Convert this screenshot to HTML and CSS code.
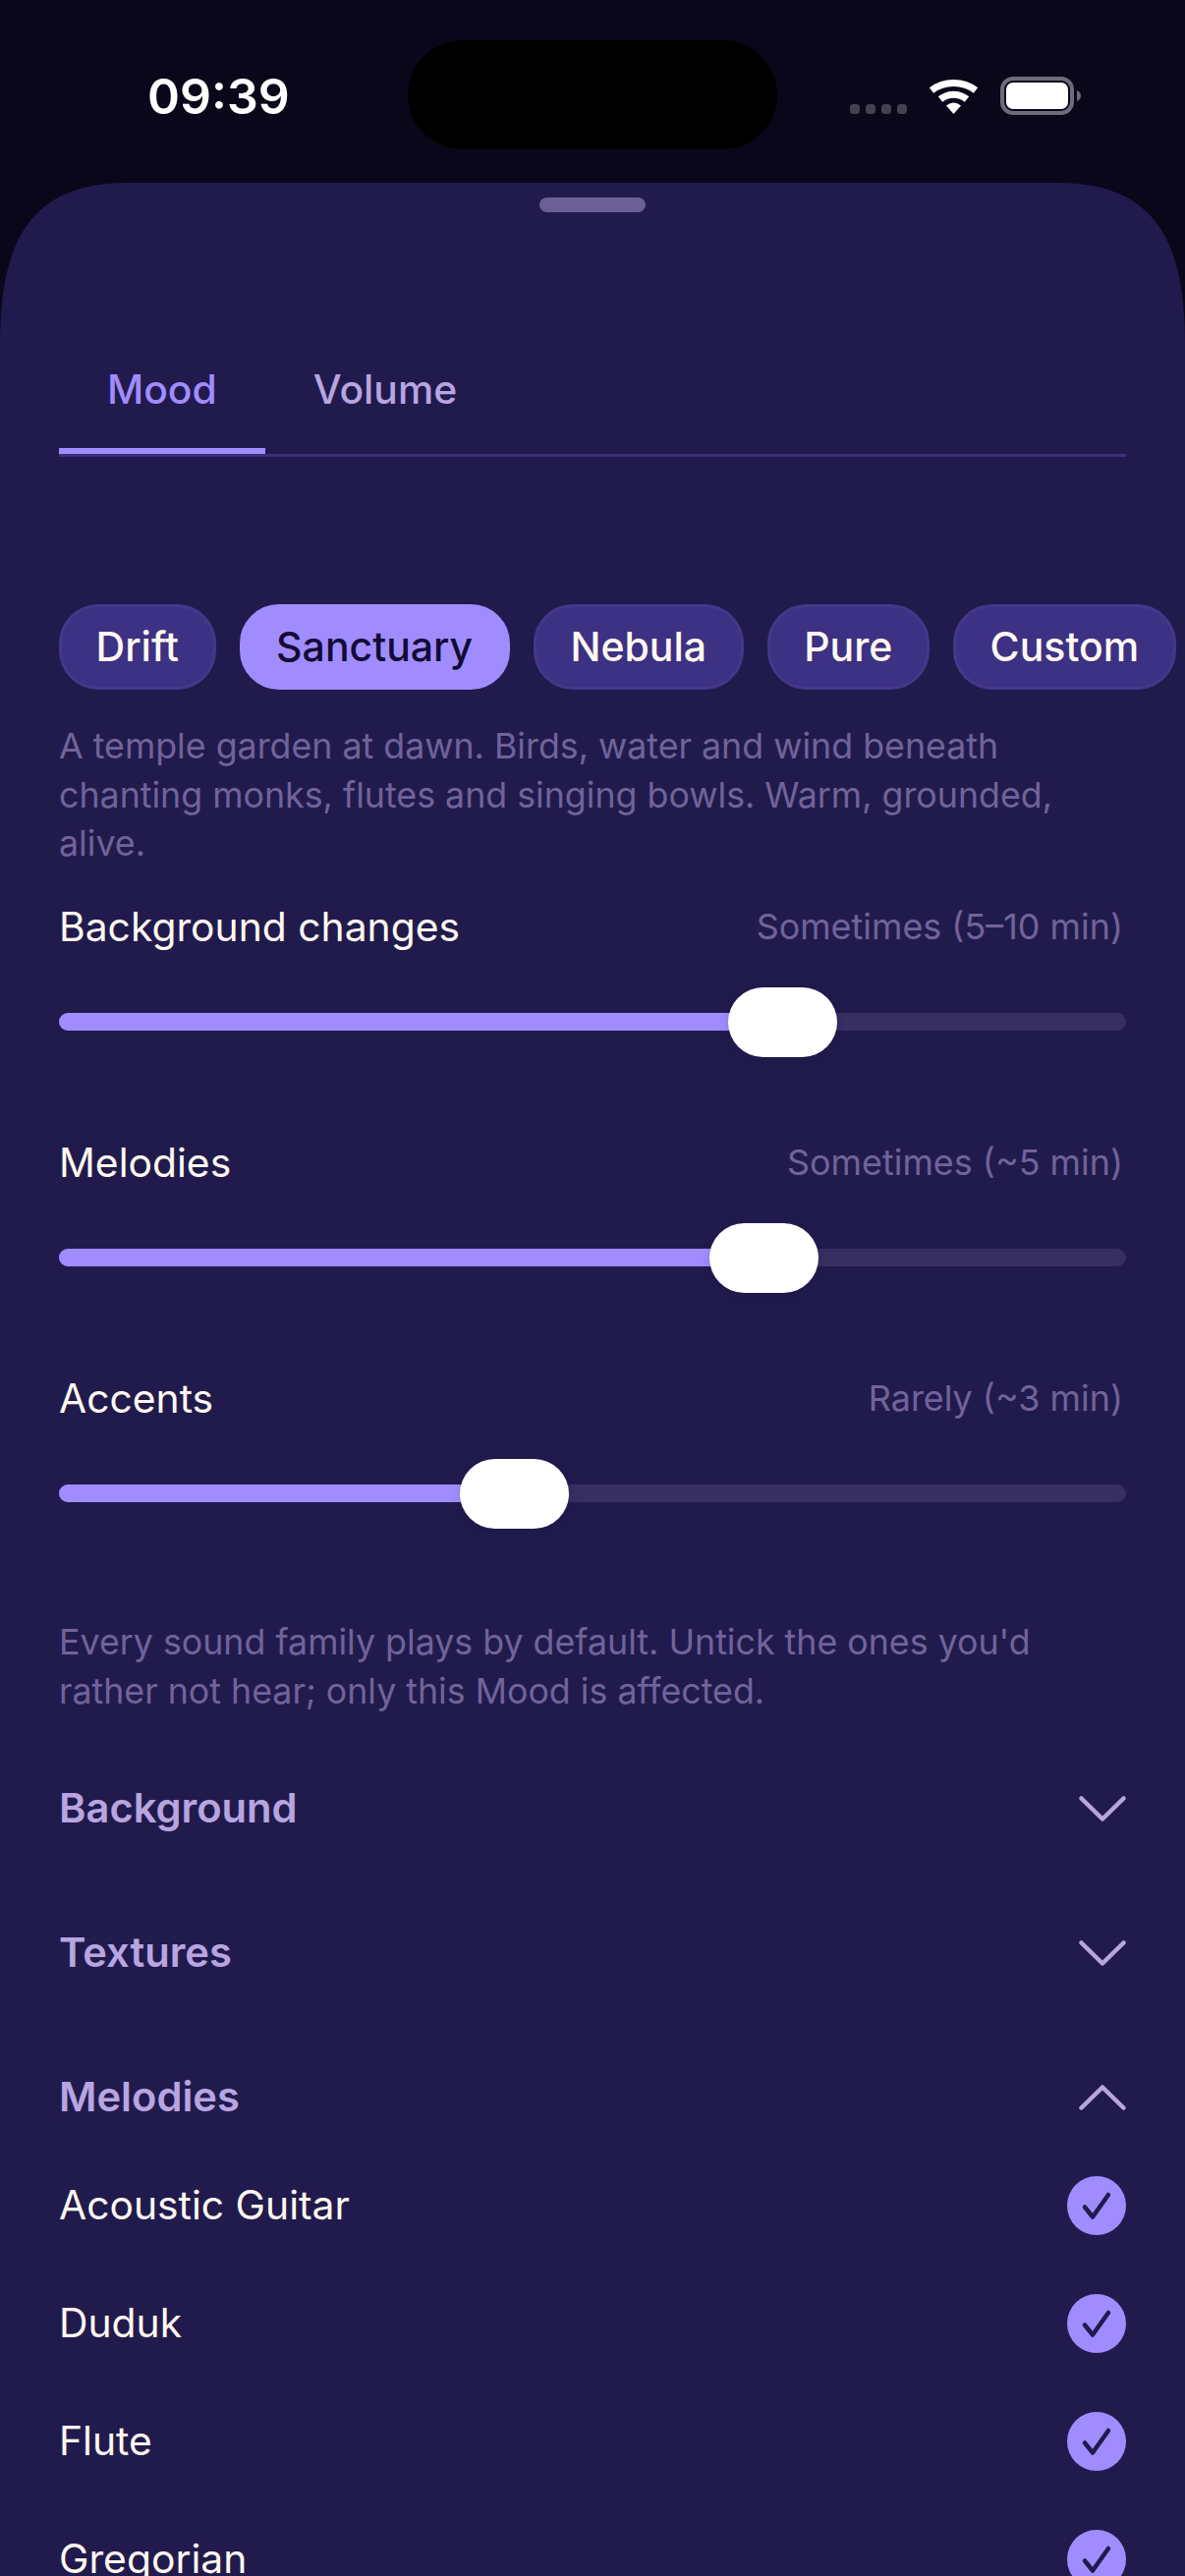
FILE: index.html
```html
<!DOCTYPE html>
<html lang="en">
<head>
<meta charset="utf-8">
<title>Mood settings</title>
<link rel="stylesheet" href="styles.css">
</head>
<body>
<div class="screen">
  <header class="status">
    <span class="time">09:39</span>
    <div class="island"></div>
    <div class="status-icons">
      <svg class="signal" width="58" height="10" viewBox="0 0 58 10"><rect x="0" y="0" width="10" height="10" rx="3.500"/><rect x="16" y="0" width="10" height="10" rx="3.500"/><rect x="32" y="0" width="10" height="10" rx="3.500"/><rect x="48" y="0" width="10" height="10" rx="3.500"/></svg>
      <svg class="wifi" width="51" height="37" viewBox="0 0 51 37"><path d="M3 13 C16 3 35 3 48 13" fill="none" stroke="#fff" stroke-width="7"/><path d="M12 22 C20 15.500 31 15.500 39 22" fill="none" stroke="#fff" stroke-width="7"/><path d="M18 28.500 Q25.500 22.500 33 28.500 L25.500 37 Z" fill="#fff"/></svg>
      <svg class="battery" width="82" height="39" viewBox="0 0 82 39"><rect x="2" y="2" width="71" height="35" rx="11" fill="none" stroke="#6e6b7c" stroke-width="4"/><rect x="6" y="6" width="63" height="27" rx="7" fill="#fff"/><path d="M78 14 Q82 16 82 19.500 Q82 23 78 25 Z" fill="#6e6b7c"/></svg>
    </div>
  </header>

  <main class="sheet">
    <div class="handle"></div>
    <nav class="tabs">
      <span class="tab tab-active">Mood</span>
      <span class="tab">Volume</span>
    </nav>

    <div class="chips">
      <span class="chip">Drift</span>
      <span class="chip chip-active">Sanctuary</span>
      <span class="chip">Nebula</span>
      <span class="chip">Pure</span>
      <span class="chip">Custom</span>
    </div>

    <p class="desc">A temple garden at dawn. Birds, water and wind beneath chanting monks, flutes and singing bowls. Warm, grounded, alive.</p>

    <section class="slider">
      <div class="slider-head"><span class="slider-label">Background changes</span><span class="slider-value">Sometimes (5–10 min)</span></div>
      <div class="track"><div class="fill" style="width:67%"></div><div class="thumb" style="left:62.7%"></div></div>
    </section>
    <section class="slider">
      <div class="slider-head"><span class="slider-label">Melodies</span><span class="slider-value">Sometimes (~5 min)</span></div>
      <div class="track"><div class="fill" style="width:65%"></div><div class="thumb" style="left:61%"></div></div>
    </section>
    <section class="slider">
      <div class="slider-head"><span class="slider-label">Accents</span><span class="slider-value">Rarely (~3 min)</span></div>
      <div class="track"><div class="fill" style="width:42%"></div><div class="thumb" style="left:37.6%"></div></div>
    </section>

    <p class="note">Every sound family plays by default. Untick the ones you'd rather not hear; only this Mood is affected.</p>

    <div class="group">
      <span class="group-title">Background</span>
      <svg class="chev" width="48" height="26" viewBox="0 0 48 26"><path d="M2.500 2.500 L24 23.500 L45.500 2.500"/></svg>
    </div>
    <div class="group">
      <span class="group-title">Textures</span>
      <svg class="chev" width="48" height="26" viewBox="0 0 48 26"><path d="M2.500 2.500 L24 23.500 L45.500 2.500"/></svg>
    </div>
    <div class="group">
      <span class="group-title">Melodies</span>
      <svg class="chev" width="48" height="26" viewBox="0 0 48 26"><path d="M2.500 23.500 L24 2.500 L45.500 23.500"/></svg>
    </div>

    <div class="items">
      <div class="item"><span class="item-label">Acoustic Guitar</span><span class="check"><svg width="60" height="60" viewBox="0 0 60 60"><path d="M18 31.500 L26 41.500 L42 19"/></svg></span></div>
      <div class="item"><span class="item-label">Duduk</span><span class="check"><svg width="60" height="60" viewBox="0 0 60 60"><path d="M18 31.500 L26 41.500 L42 19"/></svg></span></div>
      <div class="item"><span class="item-label">Flute</span><span class="check"><svg width="60" height="60" viewBox="0 0 60 60"><path d="M18 31.500 L26 41.500 L42 19"/></svg></span></div>
      <div class="item"><span class="item-label">Gregorian</span><span class="check"><svg width="60" height="60" viewBox="0 0 60 60"><path d="M18 31.500 L26 41.500 L42 19"/></svg></span></div>
    </div>
  </main>
</div>
</body>
</html>
```
FILE: styles.css
```css
* { box-sizing: border-box; }
html, body { margin: 0; padding: 0; background: #090719; }
body { font-family: Inter, "Liberation Sans", sans-serif; color: #fff; }
.screen { width: 1206px; height: 2622px; overflow: hidden; position: relative; background: #090719; }

.status { height: 186px; position: relative; display: flex; justify-content: space-between; padding: 0 106px 0 150px; }
.time { font-size: 50px; font-weight: 600; line-height: 62px; margin-top: 67px; }
.island { position: absolute; left: 415px; top: 41px; width: 376px; height: 111px; border-radius: 56px; background: #000; }
.status-icons { display: flex; align-items: flex-start; gap: 22px; }
.signal { fill: #44414f; margin-top: 106px; }
.wifi { margin-top: 79px; }
.battery { margin-top: 78px; }

.sheet { height: 2436px; background: #211b4d; clip-path: path('M0 164 C0 60 30 0 130 0 H1076 C1176 0 1206 60 1206 164 V2436 H0 Z'); padding: 15px 60px 0; position: relative; }
.handle { width: 108px; height: 15px; border-radius: 8px; background: #6a5f96; margin: 0 auto; }

.tabs { display: flex; height: 249px; padding-top: 140px; border-bottom: 3px solid #3b2f78; }
.tab { font-size: 40.800px; font-weight: 500; color: #b8a5e0; line-height: 58px; height: 95px; margin-top: 11px; padding: 0 49px; }
.tab-active { color: #a18cff; border-bottom: 6px solid #a18cff; }

.chips { display: flex; gap: 24px; margin-top: 150px; width: 1200px; }
.chip { height: 87px; flex: none; padding: 0 34.600px; border-radius: 40px; background: #3d3183; border: 3px solid #43388a; font-size: 41px; font-weight: 500; line-height: 80px; color: #fff8ef; }
.chip-active { background: #a18cff; border-color: #a18cff; color: #120b36; }

.desc { margin: 33px 0 35px; font-size: 35.750px; line-height: 49.500px; color: #71639a; }

.slider { height: 240px; }
.slider-head { display: flex; justify-content: space-between; align-items: center; height: 49px; }
.slider-label { font-size: 40.800px; color: #fff8ef; }
.slider-value { font-size: 35.900px; color: #71639a; padding-right: 3px; }
.track { position: relative; height: 18px; margin-top: 63px; border-radius: 9px; background: #372e62; }
.fill { height: 18px; border-radius: 9px; background: #a18cff; }
.thumb { position: absolute; top: -26px; width: 111px; height: 71px; border-radius: 36px; background: #fff; box-shadow: 0 2px 10px rgba(20, 12, 60, 0.15); }

.note { margin: 7px 0 22px; font-size: 35.750px; line-height: 50px; color: #71639a; }

.group { display: flex; justify-content: space-between; align-items: center; height: 147px; font-size: 41.700px; font-weight: 600; color: #b8a5e0; }
.group-title { padding-bottom: 2px; }
.chev { fill: none; stroke: #b8a5e0; stroke-width: 4.500; stroke-linecap: round; stroke-linejoin: round; }

.items { margin-top: -24px; }
.item { display: flex; justify-content: space-between; align-items: center; height: 120px; font-size: 40.800px; color: #fff8ef; }
.item-label { padding-bottom: 2px; }
.check { width: 60px; height: 60px; border-radius: 50%; background: #a18cff; display: flex; }
.check path { fill: none; stroke: #211b4d; stroke-width: 4.500; stroke-linecap: round; stroke-linejoin: round; }
```
